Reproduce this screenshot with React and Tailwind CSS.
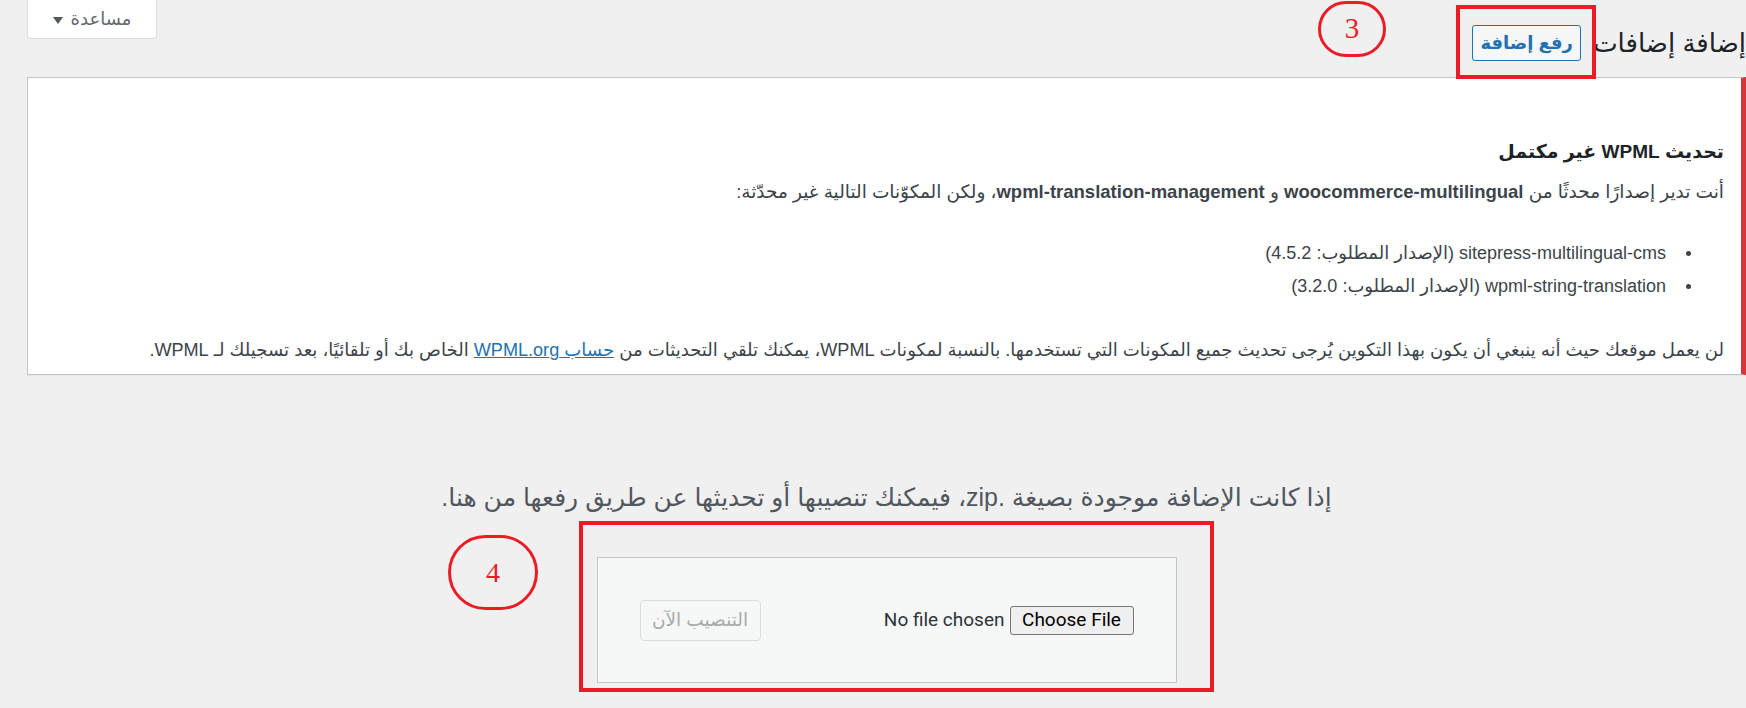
import React from "react";

const font = "font-['Liberation_Sans','DejaVu_Sans',sans-serif]";

const Notice = () => (
  <div className="bg-white border border-[#c3c4c7] border-r-[5px] border-r-[#d63638] shadow-[0_1px_1px_rgba(0,0,0,0.04)] h-[298px] pt-[60px] pr-[17px] pl-[12px] text-[#3c434a]">
    <h3 className="text-[19px] leading-[28px] font-bold text-[#1d2327]">تحديث WPML غير مكتمل</h3>
    <p className="mt-[13px] text-[18.5px] leading-[26px]">
      أنت تدير إصدارًا محدثًا من <b>woocommerce-multilingual</b> و{" "}
      <b>wpml-translation-management</b>، ولكن المكوّنات التالية غير محدّثة:
    </p>
    <ul className="mt-[35px] pr-[33px] flex flex-col gap-[7px] text-[18px] leading-[26px]">
      {[
        "sitepress-multilingual-cms (الإصدار المطلوب: 4.5.2)",
        "wpml-string-translation (الإصدار المطلوب: 3.2.0)",
      ].map((item, i) => (
        <li key={i} className="flex items-center gap-[20px]">
          <span className="w-[5px] h-[5px] rounded-full bg-[#3c434a]" />
          <span>{item}</span>
        </li>
      ))}
    </ul>
    <p className="mt-[38px] text-[18.1px] leading-[26px]">
      لن يعمل موقعك حيث أنه ينبغي أن يكون بهذا التكوين يُرجى تحديث جميع المكونات التي تستخدمها. بالنسبة لمكونات WPML، يمكنك تلقي التحديثات من{" "}
      <a href="#" className="text-[#2271b1] underline">حساب WPML.org</a> الخاص بك أو تلقائيًا، بعد تسجيلك لـ WPML.
    </p>
  </div>
);

const UploadForm = () => (
  <div className="flex flex-col items-center">
    <p className="mt-[106px] text-[25px] leading-[32px] text-[#50575e]">
      إذا كانت الإضافة موجودة بصيغة .zip، فيمكنك تنصيبها أو تحديثها عن طريق رفعها من هنا.
    </p>
    <div className="mt-[44px] w-[580px] h-[126px] bg-[#f6f7f7] border border-[#c3c4c7] flex items-center justify-between px-[42px]">
      <div className="flex items-center gap-[5px]">
        <span className="w-[124px] h-[29px] flex items-center justify-center bg-[#efefef] border border-[#767676] rounded-[3px] text-[19px] text-black font-['Roboto',sans-serif]" dir="ltr">
          Choose File
        </span>
        <span className="text-[19px] text-[#2c3338] font-['Roboto',sans-serif]" dir="ltr">No file chosen</span>
      </div>
      <button disabled className="w-[121px] h-[41px] bg-[#f6f7f7] border border-[#dcdcde] rounded-[4px] text-[18.5px] text-[#a7aaad]">
        التنصيب الآن
      </button>
    </div>
  </div>
);

export default function App() {
  return (
    <div dir="rtl" className={`relative w-[1746px] h-[708px] overflow-hidden bg-[#f0f0f1] ${font}`}>
      <div className="pl-[27px]">
        <div className="h-[77px] flex items-start justify-between">
          <div className="flex items-center gap-[12px] pt-[25px]">
            <h1 className="text-[26px] leading-[36px] text-[#1d2327]">إضافة إضافات</h1>
            <button className="w-[109px] h-[36px] bg-[#f6f7f7] border border-[#2271b1] rounded-[3px] text-[18px] font-bold text-[#2271b1]">
              رفع إضافة
            </button>
          </div>
          <div className="w-[130px] h-[39px] bg-white border border-t-0 border-[#dcdcde] rounded-b-[4px] flex items-center justify-center gap-[8px] text-[18px] text-[#646970]">
            <span>مساعدة</span>
            <span className="w-0 h-0 border-x-[5px] border-x-transparent border-t-[7px] border-t-[#50575e] mt-[2px]" />
          </div>
        </div>
        <Notice />
        <UploadForm />
      </div>

      {/* annotations */}
      <div className="absolute left-[1456px] top-[5px] w-[140px] h-[74px] border-4 border-[#ed1c24]" />
      <div className="absolute left-[1318px] top-[1px] w-[68px] h-[56px] border-[3px] border-[#ed1c24] rounded-full flex items-center justify-center text-[29px] text-[#ed1c24] font-['Liberation_Serif',serif]">
        3
      </div>
      <div className="absolute left-[579px] top-[521px] w-[635px] h-[171px] border-4 border-[#ed1c24]" />
      <div className="absolute left-[448px] top-[535px] w-[90px] h-[75px] border-[3px] border-[#ed1c24] rounded-full flex items-center justify-center text-[28px] text-[#ed1c24] font-['Liberation_Serif',serif]">
        4
      </div>
    </div>
  );
}
